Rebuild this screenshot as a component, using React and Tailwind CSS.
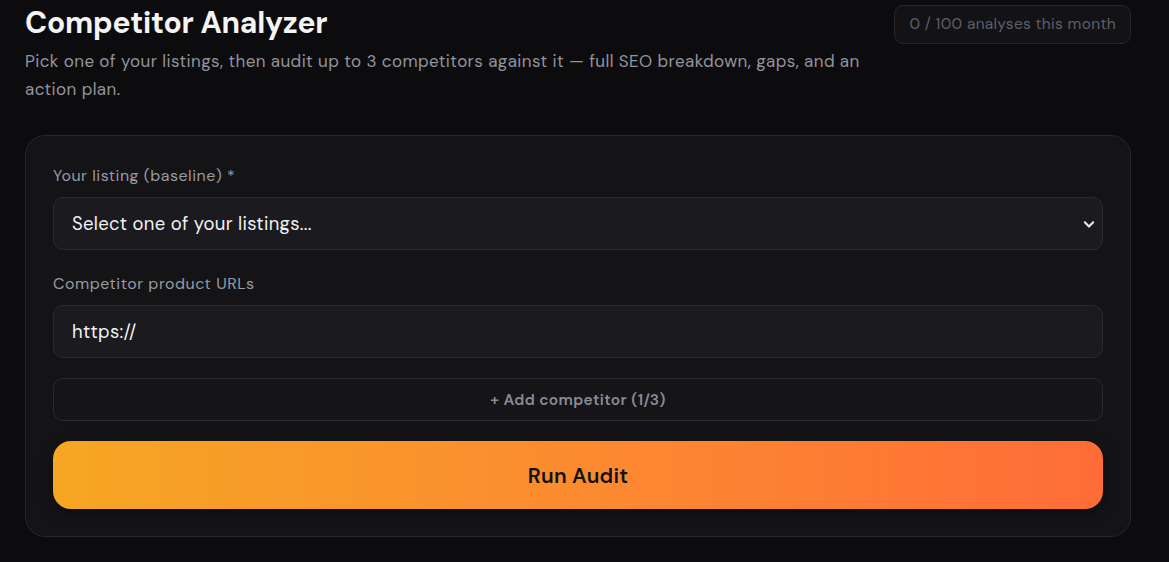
import React from "react";

export default function App() {
  return (
    <div
      className="min-h-[562px] w-full bg-[#0c0c0e] text-white"
      style={{ fontFamily: '"DM Sans", Inter, "Noto Sans", sans-serif' }}
    >
      <div className="w-[1106px] ml-[25px]">
        {/* Header */}
        <div className="flex items-start justify-between">
          <div className="pt-[4px]">
            <h1 className="text-[30px] leading-[38px] font-bold tracking-[-0.2px] text-[#f4f4f5]">
              Competitor Analyzer
            </h1>
            <p className="mt-[5px] max-w-[862px] text-[17px] leading-[28px] tracking-[0.4px] text-[#93939c]">
              Pick one of your listings, then audit up to 3 competitors against it — full SEO breakdown, gaps, and an action plan.
            </p>
          </div>
          <div className="mt-[5px] h-[39px] px-[14px] flex items-center rounded-[9px] border border-[#26262b] bg-[#131316] text-[15.5px] tracking-[0.3px] text-[#5f5f68]">
            0 / 100 analyses this month
          </div>
        </div>

        {/* Form card */}
        <div className="mt-[32px] rounded-[20px] border border-[#26262b] bg-[#141417] px-[27px] pt-[28px] pb-[27px]">
          <label className="block pt-[1px] h-[22px] text-[16px] leading-[22px] tracking-[0.5px] text-[#9a9aa3]">
            Your listing (baseline) *
          </label>
          <div className="mt-[11px] h-[53px] rounded-[10px] border border-[#2a2a30] bg-[#1b1b1f] flex items-center justify-between pl-[18px] pr-[3px] pt-[3px]">
            <span className="text-[18.5px] tracking-[0.3px] text-[#f1f1f3]">Select one of your listings...</span>
            <svg width="20" height="20" viewBox="0 0 24 24" fill="none" stroke="#e8e8ea" strokeWidth="2.6" strokeLinecap="round" strokeLinejoin="round" className="-mt-[3px]">
              <path d="M7 10l5 5 5-5" />
            </svg>
          </div>

          <label className="mt-[22px] block pt-[1px] h-[22px] text-[16px] leading-[22px] tracking-[0.5px] text-[#9a9aa3]">
            Competitor product URLs
          </label>
          <div className="mt-[11px] h-[53px] rounded-[10px] border border-[#2a2a30] bg-[#1b1b1f] flex items-center pl-[18px] pt-[3px]">
            <span className="text-[18.5px] tracking-[0.3px] text-[#f1f1f3]">https://</span>
          </div>

          <button className="mt-[20px] w-full h-[43px] rounded-[10px] border border-[#2a2a30] bg-[#151518] flex items-center justify-center pt-[3px] text-[15.5px] tracking-[0.35px] font-semibold text-[#8b8b96]">
            + Add competitor (1/3)
          </button>

          <button className="mt-[20px] w-full h-[68px] rounded-[18px] bg-gradient-to-r from-[#f6a623] to-[#ff6c37] flex items-center justify-center pt-[4px] text-[21px] tracking-[0.2px] font-semibold text-[#121212] shadow-[0_4px_14px_rgba(0,0,0,0.35)]">
            Run Audit
          </button>
        </div>
      </div>
    </div>
  );
}
